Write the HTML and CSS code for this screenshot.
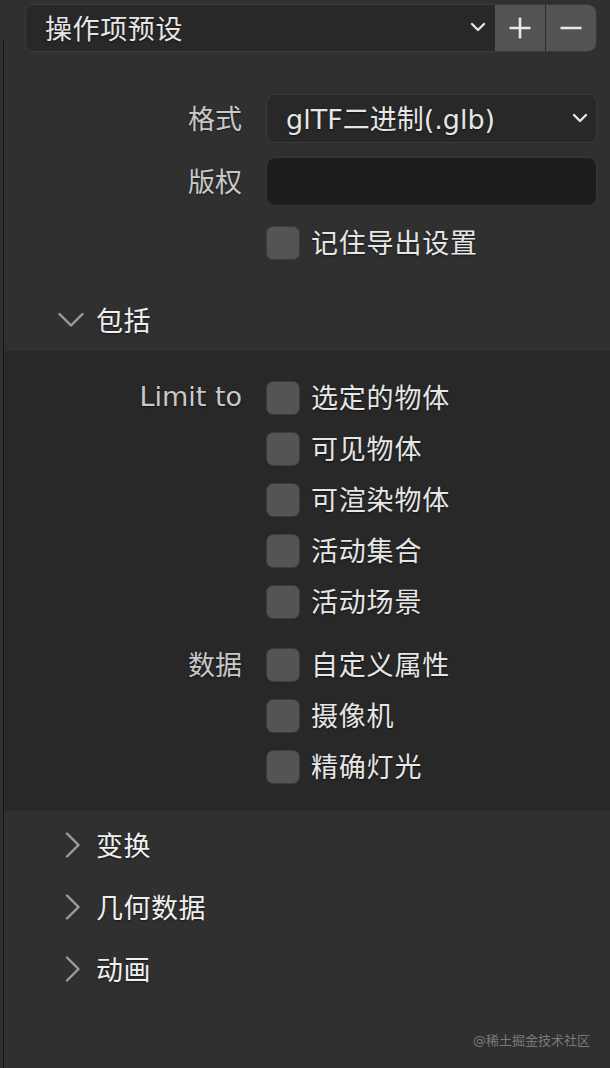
FILE: index.html
```
<!DOCTYPE html>
<html lang="zh-CN">
<head>
<meta charset="utf-8">
<title>导出 glTF</title>
<link rel="stylesheet" href="styles.css">
</head>
<body>
<div class="page">
  <div class="preset">
    <div class="preset-select">
      <span class="preset-name">操作项预设</span>
      <svg class="chev-sm" width="16" height="10" viewBox="0 0 16 10"><polyline points="2,2 8,8 14,2"/></svg>
    </div>
    <div class="preset-btn"><svg width="24" height="24" viewBox="0 0 24 24"><path d="M12 1.5V22.5M1.5 12H22.5"/></svg></div>
    <div class="preset-btn"><svg width="24" height="24" viewBox="0 0 24 24"><path d="M1.5 12H22.5"/></svg></div>
  </div>

  <div class="props">
    <div class="prop-row">
      <span class="label">格式</span>
      <div class="select">
        <span>glTF二进制(.glb)</span>
        <svg class="chev-sm" width="16" height="10" viewBox="0 0 16 10"><polyline points="2,2 8,8 14,2"/></svg>
      </div>
    </div>
    <div class="prop-row gap-row">
      <span class="label">版权</span>
      <div class="textfield"></div>
    </div>
    <div class="prop-row remember-row">
      <span class="label"></span>
      <div class="check"><span class="box"></span><span class="check-text">记住导出设置</span></div>
    </div>
  </div>

  <div class="panel-header first">
    <svg class="chev" width="26" height="26" viewBox="0 0 26 26"><polyline points="1.5,7 13,18.5 24.5,7"/></svg>
    <span class="head-text">包括</span>
  </div>
  <div class="subpanel">
    <div class="group">
      <div class="group-label">Limit to</div>
      <div class="group-items">
        <div class="check"><span class="box"></span><span class="check-text">选定的物体</span></div>
        <div class="check"><span class="box"></span><span class="check-text">可见物体</span></div>
        <div class="check"><span class="box"></span><span class="check-text">可渲染物体</span></div>
        <div class="check"><span class="box"></span><span class="check-text">活动集合</span></div>
        <div class="check"><span class="box"></span><span class="check-text">活动场景</span></div>
      </div>
    </div>
    <div class="group">
      <div class="group-label">数据</div>
      <div class="group-items">
        <div class="check"><span class="box"></span><span class="check-text">自定义属性</span></div>
        <div class="check"><span class="box"></span><span class="check-text">摄像机</span></div>
        <div class="check"><span class="box"></span><span class="check-text">精确灯光</span></div>
      </div>
    </div>
  </div>

  <div class="collapsed">
    <div class="panel-header">
      <svg class="chev" width="26" height="26" viewBox="0 0 26 26"><polyline points="9,1.5 20.5,13 9,24.5"/></svg>
      <span class="head-text">变换</span>
    </div>
    <div class="panel-header">
      <svg class="chev" width="26" height="26" viewBox="0 0 26 26"><polyline points="9,1.5 20.5,13 9,24.5"/></svg>
      <span class="head-text">几何数据</span>
    </div>
    <div class="panel-header">
      <svg class="chev" width="26" height="26" viewBox="0 0 26 26"><polyline points="9,1.5 20.5,13 9,24.5"/></svg>
      <span class="head-text">动画</span>
    </div>
  </div>

  <div class="watermark">@稀土掘金技术社区</div>
</div>
</body>
</html>
```
FILE: styles.css
```
* {
  box-sizing: border-box;
}

body {
  margin: 0;
  background: #303030;
  font-family: "DejaVu Sans", "Noto Sans CJK SC", sans-serif;
  font-size: 27px;
  color: #e6e6e6;
}

.page {
  position: relative;
  height: 1068px;
  overflow: hidden;
  padding-top: 4px;
  text-shadow: 0 1px 2px rgba(0, 0, 0, 0.55);
}

.page::before {
  content: "";
  position: absolute;
  left: 3px;
  top: 41px;
  bottom: 0;
  width: 1px;
  background: #141414;
  z-index: 2;
}

/* preset row */
.preset {
  display: flex;
  height: 48px;
  margin: 0 13px 0 25px;
  border: 1px solid #3a3a3a;
  border-radius: 9px;
  overflow: hidden;
  background: #282828;
}

.preset-select {
  flex: 1;
  display: flex;
  align-items: center;
  justify-content: space-between;
  padding: 0 8px 2px 19px;
}

.preset-name {
  letter-spacing: 0.6px;
}

.preset-btn {
  width: 51px;
  display: flex;
  align-items: center;
  justify-content: center;
  background: #545454;
  border-left: 1px solid #2c2c2c;
}

.preset-btn svg path {
  stroke: #e8e8e8;
  stroke-width: 2.6;
  fill: none;
}

.chev-sm polyline {
  fill: none;
  stroke: #e6e6e6;
  stroke-width: 2.4;
  stroke-linecap: round;
  stroke-linejoin: round;
}

/* properties */
.props {
  display: flex;
  flex-direction: column;
  margin-top: 42px;
}

.prop-row {
  display: grid;
  grid-template-columns: 242px 331px;
  column-gap: 24px;
  align-items: center;
}

.gap-row {
  margin-top: 14px;
}

.remember-row {
  margin-top: 20px;
  height: 34px;
}

.label {
  text-align: right;
  color: #c8c8c8;
  padding-bottom: 2px;
}

.select {
  height: 49px;
  display: flex;
  align-items: center;
  justify-content: space-between;
  padding: 0 8px 2px 19px;
  background: #282828;
  border: 1px solid #3a3a3a;
  border-radius: 9px;
  color: #e6e6e6;
}

.textfield {
  height: 49px;
  background: #1d1d1d;
  border: 1px solid #363636;
  border-radius: 9px;
}

/* checkbox */
.check {
  display: flex;
  align-items: center;
  gap: 11px;
  height: 51px;
}

.check-text {
  letter-spacing: 0.8px;
  padding-bottom: 3px;
}

.remember-row .check {
  height: 34px;
}

.box {
  width: 34px;
  height: 34px;
  flex: none;
  border-radius: 7px;
  background: #545454;
  border: 1px solid #3c3c3c;
}

/* panels */
.panel-header {
  height: 62px;
  display: flex;
  align-items: center;
  gap: 12px;
  padding-left: 58px;
  color: #f0f0f0;
}

.head-text {
  letter-spacing: 0.5px;
  padding-bottom: 2px;
}

.panel-header.first {
  margin-top: 29px;
}

.chev polyline {
  fill: none;
  stroke: #9c9c9c;
  stroke-width: 2.4;
  stroke-linecap: round;
  stroke-linejoin: round;
}

.subpanel {
  background: #282828;
  margin-left: 4px;
  padding: 21px 0 19px;
}

.group {
  display: grid;
  grid-template-columns: 238px 1fr;
  column-gap: 24px;
}

.group + .group {
  margin-top: 12px;
}

.group-label {
  height: 51px;
  display: flex;
  align-items: center;
  justify-content: flex-end;
  color: #c8c8c8;
  padding-bottom: 2px;
}

.collapsed {
  padding-top: 3px;
}

.watermark {
  position: absolute;
  right: 20px;
  top: 1030px;
  font-size: 13px;
  color: #7a7a7a;
  text-shadow: none;
}
```
